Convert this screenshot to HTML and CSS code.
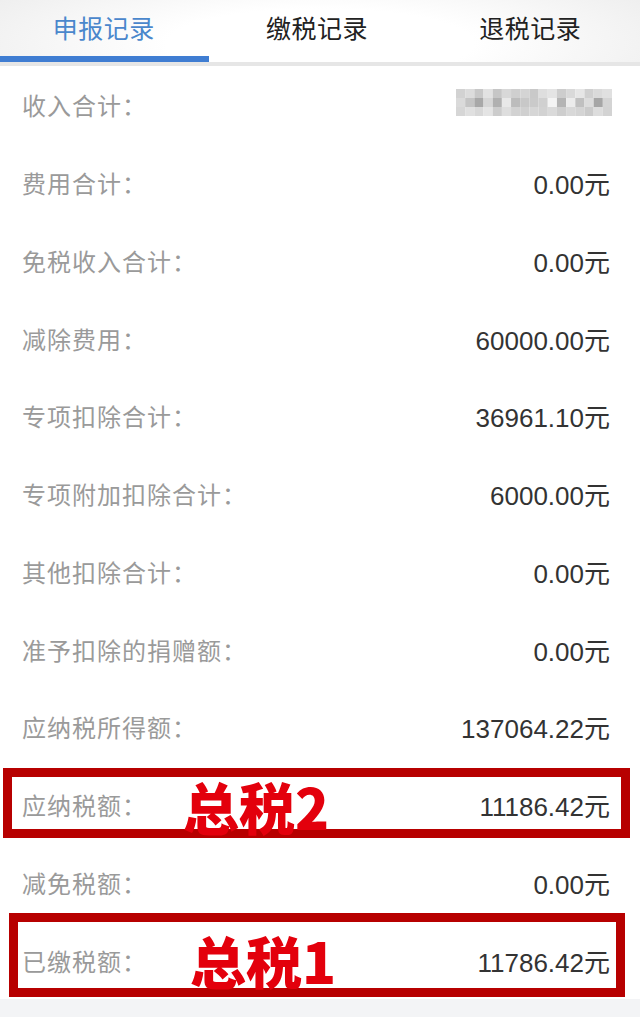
FILE: index.html
```html
<!DOCTYPE html>
<html lang="zh-CN">
<head>
<meta charset="utf-8">
<title>申报记录</title>
<link rel="stylesheet" href="styles.css">
</head>
<body>
<div class="page">
  <nav class="tabs">
    <div class="tab active">申报记录</div>
    <div class="tab">缴税记录</div>
    <div class="tab">退税记录</div>
  </nav>
  <div class="list">
    <div class="row"><span class="label">收入合计：</span>
      <svg class="mosaic" width="156" height="27" viewBox="0 0 17 3" preserveAspectRatio="none">
        <rect x="0" y="0" width="1" height="1" fill="#d2d2d2"/><rect x="1" y="0" width="1" height="1" fill="#dcdcdc"/><rect x="2" y="0" width="1" height="1" fill="#c8c8c8"/><rect x="3" y="0" width="1" height="1" fill="#e2e2e2"/><rect x="4" y="0" width="1" height="1" fill="#c6c6c6"/><rect x="5" y="0" width="1" height="1" fill="#d8d8d8"/><rect x="6" y="0" width="1" height="1" fill="#cfcfcf"/><rect x="7" y="0" width="1" height="1" fill="#d4d4d4"/><rect x="8" y="0" width="1" height="1" fill="#c9c9c9"/><rect x="9" y="0" width="1" height="1" fill="#dedede"/><rect x="10" y="0" width="1" height="1" fill="#e4e4e4"/><rect x="11" y="0" width="1" height="1" fill="#cdcdcd"/><rect x="12" y="0" width="1" height="1" fill="#d9d9d9"/><rect x="13" y="0" width="1" height="1" fill="#e6e6e6"/><rect x="14" y="0" width="1" height="1" fill="#d0d0d0"/><rect x="15" y="0" width="1" height="1" fill="#dadada"/><rect x="16" y="0" width="1" height="1" fill="#e0e0e0"/>
        <rect x="0" y="1" width="1" height="1" fill="#dadada"/><rect x="1" y="1" width="1" height="1" fill="#c4c4c4"/><rect x="2" y="1" width="1" height="1" fill="#a8a8a8"/><rect x="3" y="1" width="1" height="1" fill="#d6d6d6"/><rect x="4" y="1" width="1" height="1" fill="#b0b0b0"/><rect x="5" y="1" width="1" height="1" fill="#e8e8e8"/><rect x="6" y="1" width="1" height="1" fill="#bcbcbc"/><rect x="7" y="1" width="1" height="1" fill="#c8c8c8"/><rect x="8" y="1" width="1" height="1" fill="#cacaca"/><rect x="9" y="1" width="1" height="1" fill="#d0d0d0"/><rect x="10" y="1" width="1" height="1" fill="#f4f4f4"/><rect x="11" y="1" width="1" height="1" fill="#b4b4b4"/><rect x="12" y="1" width="1" height="1" fill="#ececec"/><rect x="13" y="1" width="1" height="1" fill="#c0c0c0"/><rect x="14" y="1" width="1" height="1" fill="#dcdcdc"/><rect x="15" y="1" width="1" height="1" fill="#a6a6a6"/><rect x="16" y="1" width="1" height="1" fill="#d4d4d4"/>
        <rect x="0" y="2" width="1" height="1" fill="#d6d6d6"/><rect x="1" y="2" width="1" height="1" fill="#e0e0e0"/><rect x="2" y="2" width="1" height="1" fill="#d8d8d8"/><rect x="3" y="2" width="1" height="1" fill="#e4e4e4"/><rect x="4" y="2" width="1" height="1" fill="#cccccc"/><rect x="5" y="2" width="1" height="1" fill="#dedede"/><rect x="6" y="2" width="1" height="1" fill="#d2d2d2"/><rect x="7" y="2" width="1" height="1" fill="#d0d0d0"/><rect x="8" y="2" width="1" height="1" fill="#d6d6d6"/><rect x="9" y="2" width="1" height="1" fill="#d2d2d2"/><rect x="10" y="2" width="1" height="1" fill="#dadada"/><rect x="11" y="2" width="1" height="1" fill="#cecece"/><rect x="12" y="2" width="1" height="1" fill="#d8d8d8"/><rect x="13" y="2" width="1" height="1" fill="#d4d4d4"/><rect x="14" y="2" width="1" height="1" fill="#cbcbcb"/><rect x="15" y="2" width="1" height="1" fill="#dddddd"/><rect x="16" y="2" width="1" height="1" fill="#d3d3d3"/>
      </svg>
    </div>
    <div class="row"><span class="label">费用合计：</span><span class="value">0.00元</span></div>
    <div class="row"><span class="label">免税收入合计：</span><span class="value">0.00元</span></div>
    <div class="row"><span class="label">减除费用：</span><span class="value">60000.00元</span></div>
    <div class="row"><span class="label">专项扣除合计：</span><span class="value">36961.10元</span></div>
    <div class="row"><span class="label">专项附加扣除合计：</span><span class="value">6000.00元</span></div>
    <div class="row"><span class="label">其他扣除合计：</span><span class="value">0.00元</span></div>
    <div class="row"><span class="label">准予扣除的捐赠额：</span><span class="value">0.00元</span></div>
    <div class="row"><span class="label">应纳税所得额：</span><span class="value">137064.22元</span></div>
    <div class="row"><span class="label">应纳税额：</span><span class="value">11186.42元</span></div>
    <div class="row"><span class="label">减免税额：</span><span class="value">0.00元</span></div>
    <div class="row"><span class="label">已缴税额：</span><span class="value">11786.42元</span></div>
  </div>
  <div class="footer"></div>

  <div class="mark mark-2"></div>
  <div class="note note-2">总税2</div>
  <div class="mark mark-1"></div>
  <div class="note note-1">总税1</div>
</div>
</body>
</html>
```

FILE: styles.css
```css
html, body {
  margin: 0;
  padding: 0;
  background: #ffffff;
}

.page {
  position: relative;
  width: 640px;
  height: 1017px;
  overflow: hidden;
  font-family: "Noto Sans CJK SC", sans-serif;
}

.tabs {
  display: grid;
  grid-template-columns: 1fr 1fr 1fr;
  height: 62px;
  border-bottom: 4px solid #e6e6e6;
  background: radial-gradient(ellipse 60% 140% at 50% 70%, #ffffff 40%, #eeeeee 100%);
}

.tab {
  position: relative;
  display: flex;
  align-items: center;
  justify-content: center;
  padding-bottom: 8px;
  padding-right: 6px;
  font-size: 25px;
  color: #222222;
  letter-spacing: 0.5px;
}

.tab.active {
  color: #4a87cc;
}

.tab.active::after {
  content: "";
  position: absolute;
  left: 0;
  right: 4px;
  bottom: 0;
  height: 6px;
  background: #3f7dd2;
}

.list {
  display: flex;
  flex-direction: column;
}

.row {
  height: 77.75px;
  display: flex;
  align-items: center;
  justify-content: space-between;
  padding: 0 30px 0 22px;
}

.label {
  font-size: 24px;
  color: #9a9a9a;
  letter-spacing: 1px;
}

.value {
  font-family: "Liberation Sans", "Noto Sans CJK SC", sans-serif;
  font-size: 26px;
  color: #333333;
}

.mosaic {
  display: block;
  margin-right: -2px;
  margin-top: -4px;
}

.footer {
  height: 30px;
  background: #f3f4f6;
}

.mark {
  position: absolute;
  box-sizing: border-box;
  border: 9px solid #b70000;
}

.mark-2 {
  left: 3px;
  top: 768px;
  width: 627px;
  height: 70px;
}

.mark-1 {
  left: 9px;
  top: 913px;
  width: 616px;
  height: 84px;
}

.note {
  position: absolute;
  font-family: "Noto Sans CJK SC", sans-serif;
  font-weight: 900;
  font-size: 56px;
  line-height: 56px;
  color: #e3000c;
}

.note-2 {
  left: 183px;
  top: 778px;
}

.note-1 {
  left: 190px;
  top: 932px;
}
```
